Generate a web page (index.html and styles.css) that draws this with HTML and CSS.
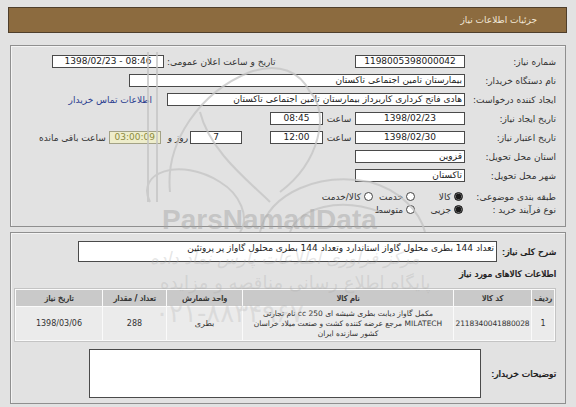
FILE: index.html
```html
<!DOCTYPE html>
<html lang="fa" dir="rtl">
<head>
  <meta charset="UTF-8" />
  <title>جزئیات اطلاعات نیاز</title>
  <link rel="stylesheet" href="styles.css">
</head>
<body>
  <div class="page">
    <div class="title-bar">جزئیات اطلاعات نیاز</div>

    <!-- مشخصات نیاز -->
    <div class="panel info">
      <div class="row">
        <span class="lbl">شماره نیاز:</span>
        <span class="box w110">1198005398000042</span>
        <div class="pub">
          <span>تاریخ و ساعت اعلان عمومی:</span>
          <span class="box pub-date">1398/02/23 - 08:46</span>
        </div>
      </div>
      <div class="row">
        <span class="lbl">نام دستگاه خریدار:</span>
        <span class="box txt buyer">بیمارستان تامین اجتماعی تاکستان</span>
      </div>
      <div class="row">
        <span class="lbl">ایجاد کننده درخواست:</span>
        <span class="box txt creator">هادی فاتح کرداری کاربرداز بیمارستان تامین اجتماعی تاکستان</span>
        <a class="contact" href="#">اطلاعات تماس خریدار</a>
      </div>
      <div class="row">
        <span class="lbl">تاریخ ایجاد نیاز:</span>
        <span class="box w110">1398/02/23</span>
        <span class="at">ساعت</span>
        <span class="box time">08:45</span>
      </div>
      <div class="row">
        <span class="lbl">تاریخ اعتبار نیاز:</span>
        <span class="box w110">1398/02/30</span>
        <span class="at">ساعت</span>
        <span class="box time">12:00</span>
        <span class="box days">7</span>
        <span class="and">روز و</span>
        <span class="box remain">03:00:09</span>
        <span class="left-txt">ساعت باقی مانده</span>
      </div>
      <div class="row">
        <span class="lbl">استان محل تحویل:</span>
        <span class="box txt w110">قزوین</span>
      </div>
      <div class="row">
        <span class="lbl">شهر محل تحویل:</span>
        <span class="box txt w110">تاکستان</span>
      </div>
      <div class="row radios first">
        <span class="lbl">طبقه بندی موضوعی:</span>
        <span class="opt o1"><i class="radio on"></i>کالا</span>
        <span class="opt o2"><i class="radio"></i>خدمت</span>
        <span class="opt"><i class="radio"></i>کالا/خدمت</span>
      </div>
      <div class="row radios">
        <span class="lbl">نوع فرآیند خرید :</span>
        <span class="opt o1"><i class="radio on"></i>جزیی</span>
        <span class="opt o2"><i class="radio"></i>متوسط</span>
      </div>
    </div>

    <!-- کالاها -->
    <div class="panel goods">
      <div class="desc-row">
        <span class="blbl">شرح کلی نیاز:</span>
        <div class="desc-box">تعداد 144 بطری محلول گاواز استاندارد وتعداد 144 بطری محلول گاواز پر پروتئین</div>
      </div>
      <div class="section-title">اطلاعات کالاهای مورد نیاز</div>
      <table class="items">
        <thead>
          <tr>
            <th class="c-idx">ردیف</th>
            <th class="c-code">کد کالا</th>
            <th class="c-name">نام کالا</th>
            <th class="c-unit">واحد شمارش</th>
            <th class="c-qty">تعداد / مقدار</th>
            <th class="c-date">تاریخ نیاز</th>
          </tr>
        </thead>
        <tbody>
          <tr>
            <td>1</td>
            <td class="code">2118340041880028</td>
            <td class="name">مکمل گاواز دیابت بطری شیشه ای 250 cc نام تجارتی<br>MILATECH مرجع عرضه کننده کشت و صنعت میلاد خراسان<br>کشور سازنده ایران</td>
            <td>بطری</td>
            <td>288</td>
            <td>1398/03/06</td>
          </tr>
        </tbody>
      </table>
      <div class="note-row">
        <span class="blbl">توضیحات خریدار:</span>
        <div class="note-box"></div>
      </div>
    </div>

    <!-- واترمارک -->
    <div class="wm">
      <svg class="wm-logo" width="290" height="180" viewBox="0 0 290 180">
        <g fill="none" stroke="#c4c4c4" stroke-width="2">
          <path d="M8 0 V150 M17 0 V150" />
          <path d="M10 150 C-5 120 40 105 80 130 C100 142 110 165 100 180" />
          <path d="M30 140 C25 90 60 40 110 20 C140 10 160 20 170 40" />
          <path d="M60 60 C70 100 110 130 130 150" />
          <path d="M120 180 C130 140 180 120 230 130 C260 138 280 160 285 180" />
          <path d="M150 180 C160 155 200 145 240 160" />
          <path d="M170 40 C190 60 180 110 140 140" />
        </g>
      </svg>
      <div class="wm-en">ParsNamadData</div>
      <div class="wm-fa1">مرکز فراوری اطلاعات پارس نماد داده</div>
      <div class="wm-fa2">پایگاه اطلاع رسانی مناقصه و مزایده</div>
      <div class="wm-tel">۰۲۱-۸۸۳۴۹۶۷۰</div>
    </div>
  </div>
</body>
</html>
```

FILE: styles.css
```css
* {
  margin: 0;
  padding: 0;
  box-sizing: border-box;
}

body {
  background: #e2e2e2;
  font-family: "DejaVu Sans", sans-serif;
  font-size: 9px;
  color: #333;
  width: 576px;
  height: 407px;
  overflow: hidden;
}

.page {
  position: relative;
  padding: 7px 9px 0 8px;
}

.title-bar {
  height: 26px;
  line-height: 24px;
  background: #8c6b3f;
  border: 1px solid #4e3e2b;
  color: #f2e8d8;
  padding-right: 29px;
}

.panel {
  margin: 12px 1px 0 2px;
  border: 1px solid #8f8f8f;
  box-shadow: inset 1px 1px 0 #f4f4f4;
}

/* ردیف های مشخصات */
.info {
  padding: 6px 9px 10px 0;
}

.row {
  display: flex;
  align-items: center;
  height: 19px;
}

.lbl {
  width: 91px;
  flex-shrink: 0;
  white-space: nowrap;
}

.box {
  flex-shrink: 0;
  height: 13px;
  line-height: 11px;
  background: #fff;
  border: 1px solid #4a4a4a;
  color: #222;
  text-align: center;
  white-space: nowrap;
  overflow: hidden;
}

.box.txt {
  text-align: right;
  padding-right: 2px;
}

.w110 { width: 110px; }
.buyer { width: 336px; }
.creator { width: 298px; }
.time { width: 53px; }

.pub {
  display: flex;
  align-items: center;
  gap: 3px;
  margin-right: auto;
  margin-left: 41px;
}

.pub-date {
  width: 112px;
  direction: ltr;
}

.contact {
  color: #2a3d8f;
  text-decoration: none;
  margin-right: 15px;
}

.at {
  width: 32px;
  text-align: center;
}

.days {
  width: 52px;
  margin-right: 28px;
}

.and {
  margin: 0 2px;
}

.remain {
  width: 52px;
  margin-right: 5px;
  background: #eeedcb;
  border-color: #a3a286;
  color: #8c8b3d;
}

.left-txt {
  margin-right: 3px;
}

.radios {
  height: 13px;
}

.radios.first {
  margin-top: 5px;
}

.opt {
  display: flex;
  align-items: center;
  gap: 3px;
}

.o1 {
  width: 48px;
  margin-right: 2px;
}

.o2 { width: 42px; }

.radio {
  display: inline-block;
  width: 9px;
  height: 9px;
  border-radius: 50%;
  border: 1px solid #444;
  background: #fff;
}

.radio.on {
  border-color: #111;
  background: radial-gradient(circle, #1a1a1a 0 2.5px, #6a6a6a 3px);
}

/* بخش کالاها */
.goods {
  margin-top: 5px;
  padding: 8px 9px 5px 10px;
}

/* پررنگ نمایی با سایه تا فونت عربی عوض نشود */
.blbl,
.section-title,
.items th {
  font-weight: normal;
  color: #222;
  text-shadow: 0.5px 0 0 #222;
}

.blbl {
  white-space: nowrap;
  line-height: 12px;
}

.desc-row {
  display: flex;
  align-items: center;
  height: 21px;
}

.desc-row .blbl {
  width: 59px;
  min-width: 0;
  flex-shrink: 0;
}

.desc-box {
  flex-shrink: 0;
  width: 419px;
  height: 21px;
  background: #fff;
  border: 1px solid #4a4a4a;
  padding: 1px 2px;
  line-height: 10px;
  color: #222;
  white-space: nowrap;
  overflow: hidden;
}

.section-title {
  margin-top: 6px;
  line-height: 12px;
}

.items {
  margin-top: 8px;
  width: 534px;
  border-collapse: separate;
  border-spacing: 1px;
  background: #fafafa;
  border: 1px solid #c4c4c4;
  table-layout: fixed;
}

.items th {
  background: #c9c9c9;
  color: #333;
  height: 16px;
  font-size: 8px;
  text-shadow: 0.4px 0 0 #333;
}

.items td {
  background: #ebebeb;
  height: 33px;
  text-align: center;
  color: #333;
  font-size: 8px;
  white-space: nowrap;
  overflow: hidden;
}

.items td.code {
  font-size: 7.5px;
  letter-spacing: -0.15px;
}

.items td.name {
  font-size: 7.5px;
  line-height: 10px;
}

.c-idx { width: 22px; }
.c-code { width: 77px; }
.c-name { width: 210px; }
.c-unit { width: 75px; }
.c-qty { width: 63px; }
.c-date { width: 86px; }

.note-row {
  display: flex;
  align-items: center;
  margin-top: 7px;
}

.note-row .blbl {
  width: 75px;
  flex-shrink: 0;
}

.note-box {
  flex-shrink: 0;
  width: 392px;
  height: 49px;
  background: #fff;
  border: 1px solid #4a4a4a;
}

/* واترمارک */
.wm {
  position: absolute;
  inset: 0;
  pointer-events: none;
}

.wm-logo {
  position: absolute;
  left: 140px;
  top: 52px;
  opacity: 0.75;
}

.wm-en {
  position: absolute;
  left: 162px;
  top: 204px;
  font-family: "Liberation Sans", sans-serif;
  font-weight: bold;
  font-size: 28px;
  color: rgba(160, 160, 160, 0.45);
  direction: ltr;
}

.wm-fa1 {
  position: absolute;
  left: 150px;
  top: 248px;
  font-size: 17px;
  font-style: italic;
  color: rgba(170, 170, 170, 0.3);
}

.wm-fa2 {
  position: absolute;
  left: 160px;
  top: 272px;
  font-size: 18px;
  color: rgba(170, 170, 170, 0.3);
}

.wm-tel {
  position: absolute;
  left: 155px;
  top: 298px;
  font-size: 26px;
  color: rgba(170, 170, 170, 0.25);
  direction: ltr;
}
```
